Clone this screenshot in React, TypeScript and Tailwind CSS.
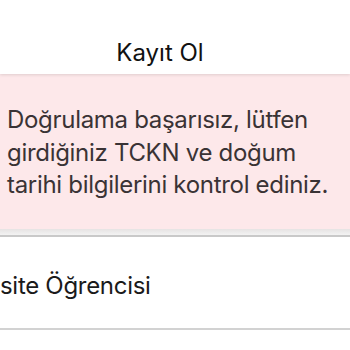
export default function App() {
  return (
    <div className="w-[350px] h-[350px] overflow-hidden bg-white font-['Inter',sans-serif]">
      <header className="h-[74px] flex items-end justify-center pr-[30px] pb-[9px] bg-white shadow-[0_1px_3px_rgba(0,0,0,0.12)] relative z-10">
        <h1 className="text-[24px] leading-none text-[#111] tracking-[0px]">Kayıt Ol</h1>
      </header>
      <div className="bg-[#fde8ea] h-[155px] pl-[7px] pt-[30px] text-[24px] leading-[32.5px] text-[#3a3335] tracking-[-0.3px] whitespace-nowrap">
        Doğrulama başarısız, lütfen
        <br />
        girdiğiniz TCKN ve doğum
        <br />
        tarihi bilgilerini kontrol ediniz.
      </div>
      <div className="h-[8px] bg-gradient-to-b from-[#e6e3e3] to-[#f3f3f3] border-b-2 border-[#c9c9c9]" />
      <div className="h-[93px] border-b-2 border-[#d2d2d2] flex items-center pt-[6px]">
        <span className="text-[24px] text-[#1a1a1a] tracking-[-0.3px] whitespace-nowrap">site Öğrencisi</span>
      </div>
    </div>
  );
}
